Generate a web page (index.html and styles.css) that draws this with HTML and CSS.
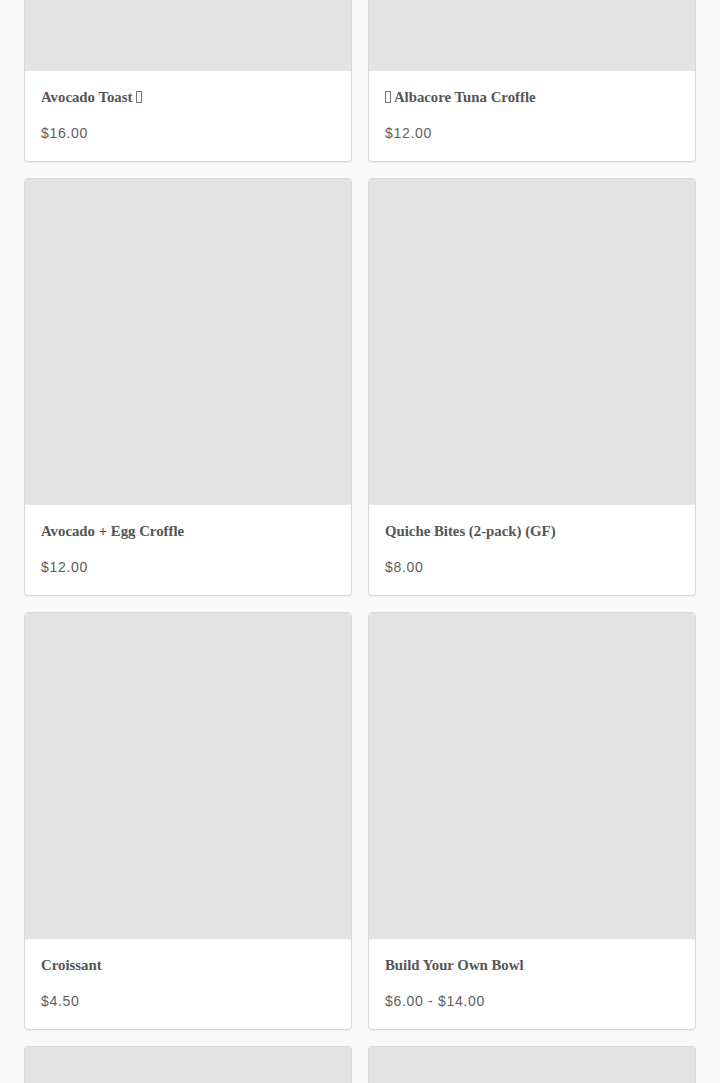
FILE: index.html
```html
<!DOCTYPE html>
<html lang="en">
<head>
    <meta charset="UTF-8">
    <meta name="viewport" content="width=device-width, initial-scale=1.0">
    <title>Menu</title>
    <link rel="stylesheet" href="styles.css">
</head>
<body>
    <main class="menu">
        <div class="product">
            <div class="product-image"></div>
            <div class="product-info">
                <h3 class="product-name">Avocado Toast <span class="tofu"></span></h3>
                <p class="product-price">$16.00</p>
            </div>
        </div>
        <div class="product">
            <div class="product-image"></div>
            <div class="product-info">
                <h3 class="product-name"><span class="tofu"></span> Albacore Tuna Croffle</h3>
                <p class="product-price">$12.00</p>
            </div>
        </div>
        <div class="product">
            <div class="product-image"></div>
            <div class="product-info">
                <h3 class="product-name">Avocado + Egg Croffle</h3>
                <p class="product-price">$12.00</p>
            </div>
        </div>
        <div class="product">
            <div class="product-image"></div>
            <div class="product-info">
                <h3 class="product-name">Quiche Bites (2-pack) (GF)</h3>
                <p class="product-price">$8.00</p>
            </div>
        </div>
        <div class="product">
            <div class="product-image"></div>
            <div class="product-info">
                <h3 class="product-name">Croissant</h3>
                <p class="product-price">$4.50</p>
            </div>
        </div>
        <div class="product">
            <div class="product-image"></div>
            <div class="product-info">
                <h3 class="product-name">Build Your Own Bowl</h3>
                <p class="product-price">$6.00 - $14.00</p>
            </div>
        </div>
        <div class="product">
            <div class="product-image"></div>
            <div class="product-info">
                <h3 class="product-name">&nbsp;</h3>
                <p class="product-price">&nbsp;</p>
            </div>
        </div>
        <div class="product">
            <div class="product-image"></div>
            <div class="product-info">
                <h3 class="product-name">&nbsp;</h3>
                <p class="product-price">&nbsp;</p>
            </div>
        </div>
    </main>
</body>
</html>
```

FILE: styles.css
```css
body {
    margin: 0;
    padding: 0;
    background-color: #fafafa;
    font-family: "Liberation Sans", Arial, sans-serif;
    overflow: hidden;
}

.menu {
    display: grid;
    grid-template-columns: 1fr 1fr;
    gap: 16px;
    padding: 0 24px;
    margin-top: -256px;
}

.product {
    background-color: #fff;
    border: 1px solid #d9d9d9;
    border-radius: 4px;
    box-shadow: 0 1px 2px rgba(0, 0, 0, 0.06);
    overflow: hidden;
}

.product-image {
    aspect-ratio: 1 / 1;
    background-color: #e3e3e3;
}

.product-info {
    padding: 16px 16px 18px 16px;
}

.product-name {
    margin: 0 0 16px 0;
    font-family: "Liberation Serif", "Times New Roman", serif;
    font-weight: bold;
    font-size: 14.8px;
    line-height: 20px;
    color: #555;
}

.tofu {
    display: inline-block;
    width: 4px;
    height: 10px;
    border: 1px solid #777;
    vertical-align: -1px;
}

.product-price {
    margin: 0;
    font-size: 14px;
    line-height: 20px;
    color: #5e5e5e;
    letter-spacing: 0.7px;
}
```
